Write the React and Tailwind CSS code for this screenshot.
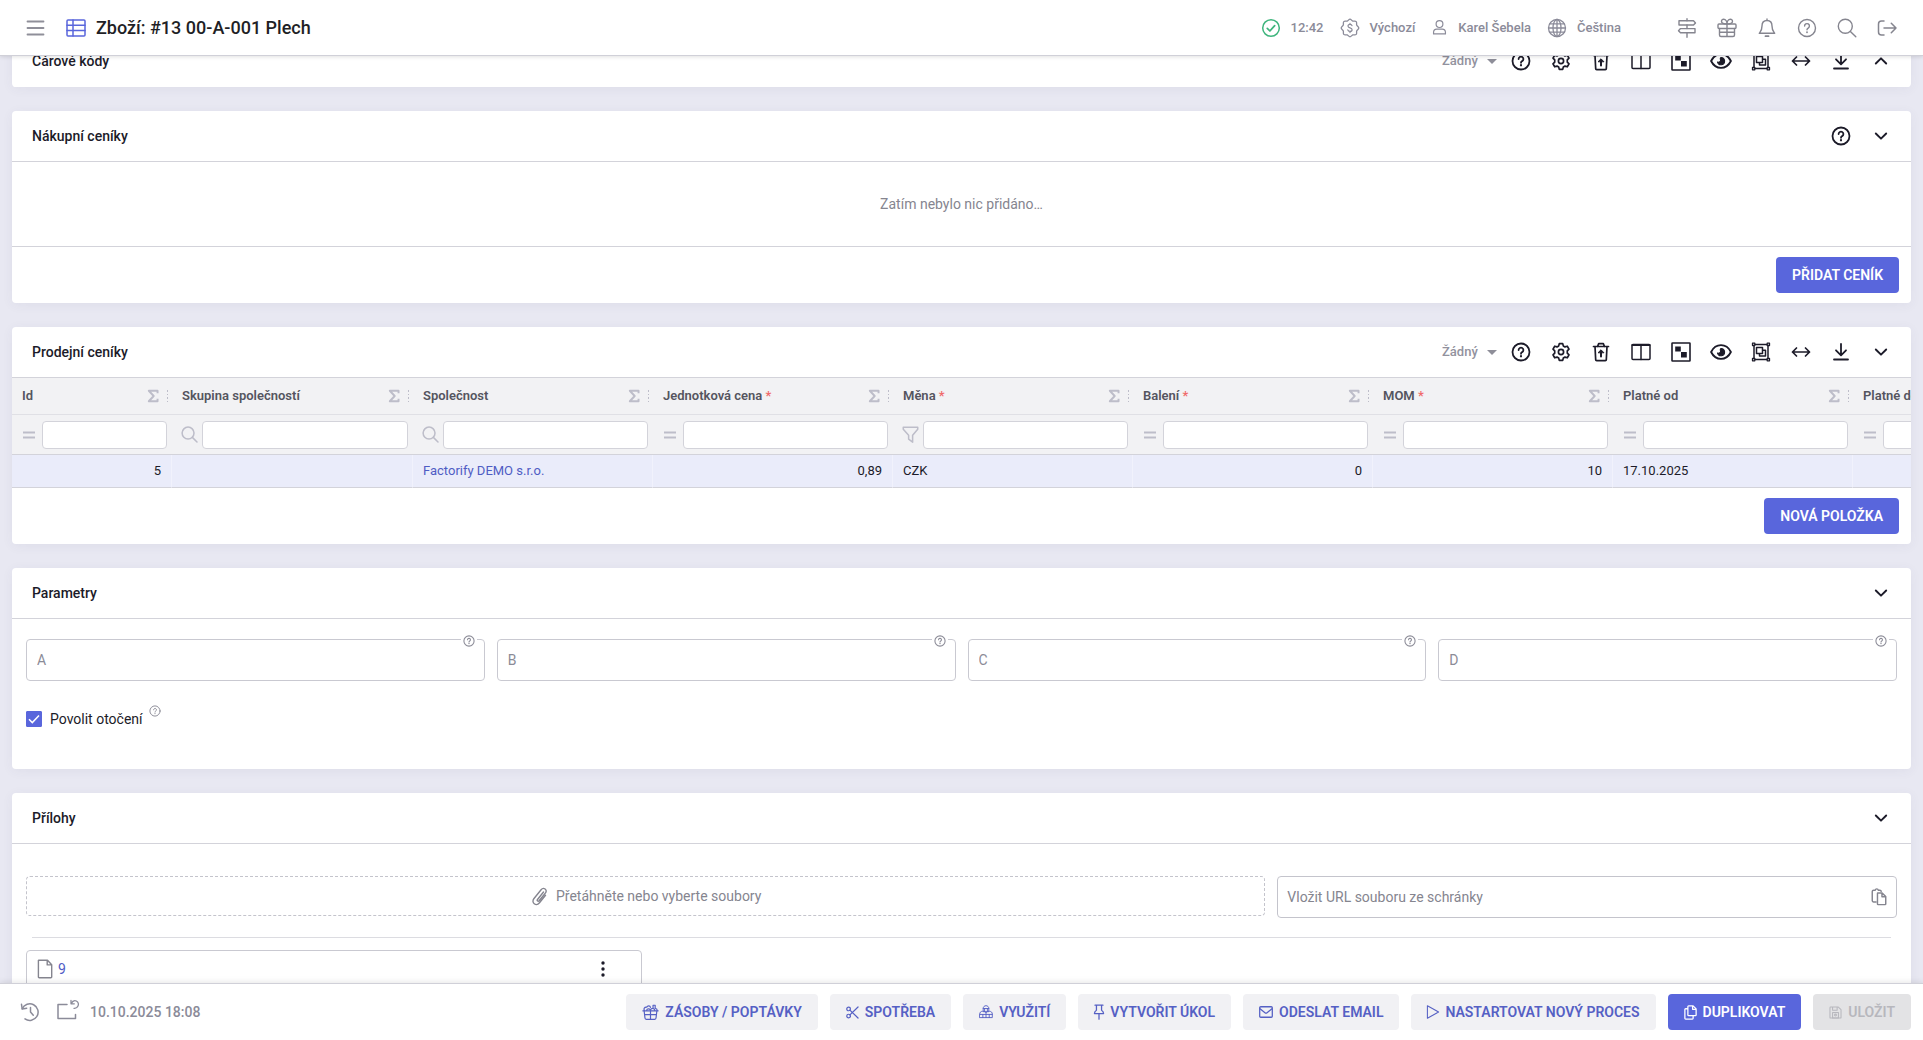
import React from "react";

function Icon({ size = 20, sw = 1.5, className = "", children }) {
  return (
    <svg
      width={size}
      height={size}
      viewBox="0 0 20 20"
      fill="none"
      stroke="currentColor"
      strokeWidth={sw}
      strokeLinecap="round"
      strokeLinejoin="round"
      aria-hidden="true"
      className={`shrink-0 ${className}`}
    >
      {children}
    </svg>
  );
}

const HelpIcon = (p) => (
  <Icon {...p}>
    <circle cx="10" cy="10" r="8.5" />
    <path d="M7.6 8a2.4 2.4 0 1 1 3.6 2.1c-.8.5-1.2.9-1.2 1.7" />
    <path d="M10 14.2v.1" strokeWidth={(p.sw || 1.5) + 0.4} />
  </Icon>
);
const MenuIcon = () => (
  <Icon sw={1.8}>
    <path d="M2.500 3.500h16M2.500 10h16M2.500 16.500h16" />
  </Icon>
);
const TableIcon = () => (
  <Icon sw={1.5}>
    <rect x="1" y="2" width="18" height="16" rx="1" />
    <path d="M1 7.3h18M1 12.6h18M7 2v16" />
  </Icon>
);
const OkIcon = () => (
  <Icon sw={1.5}>
    <circle cx="10" cy="10" r="8.3" />
    <path d="M6.3 10.4l2.6 2.6 4.8-5.4" strokeWidth="1.7" />
  </Icon>
);
const MoneyBadgeIcon = () => (
  <Icon sw={1.3}>
    <path d="M10 1.200c1.100 0 1.700 1.500 2.800 1.900s2.500-.4 3.400.5.100 2.300.5 3.400 2.100 1.800 2.100 3-1.700 1.900-2.100 3 .4 2.500-.5 3.400-2.300.100-3.400.5-1.700 1.900-2.800 1.900-1.700-1.500-2.800-1.900-2.500.4-3.400-.5-.1-2.300-.5-3.400-2.100-1.800-2.100-3 1.700-1.900 2.100-3-.4-2.500.5-3.400 2.300-.1 3.400-.5S8.900 1.200 10 1.200z" />
    <path d="M12 7.700c-.2-.9-1-1.300-2-1.300s-2 .5-2 1.600c0 2.400 4.100 1.200 4.100 3.700 0 1.100-1 1.700-2.100 1.700s-2-.5-2.200-1.500M10 5.300v1M10 13.500v1.100" strokeWidth="1.200" />
  </Icon>
);
const UserIcon = () => (
  <Icon sw={1.4} size={17}>
    <circle cx="10" cy="6" r="4" />
    <path d="M3 17.500v-1.500c0-2.400 1.500-4 3.800-4h6.400c2.300 0 3.800 1.600 3.800 4v1.500z" />
  </Icon>
);
const GlobeIcon = () => (
  <Icon sw={1.3}>
    <circle cx="10" cy="10" r="8.500" />
    <ellipse cx="10" cy="10" rx="4" ry="8.500" />
    <path d="M10 1.500v17M1.500 10h17M2.800 5.800h14.400M2.800 14.200h14.400" />
  </Icon>
);
const SignpostIcon = () => (
  <Icon sw={1.4}>
    <path d="M10 .8v2M10 7v3.600M10 14.800v4.400" />
    <path d="M2 2.800h14.500l2 2.100-2 2.100H2z" />
    <path d="M18 10.600H3.500l-2 2.100 2 2.100H18z" />
  </Icon>
);
const GiftIcon = () => (
  <Icon sw={1.4}>
    <rect x="1" y="6" width="18" height="4.500" rx="1" />
    <path d="M2.500 10.500V17a1.500 1.500 0 0 0 1.500 1.500h12a1.500 1.500 0 0 0 1.500-1.500v-6.500M10 6v12.500M10 6C8 6 4.500 5.500 4.500 3.300 4.500 2 5.500 1.300 6.600 1.300 9 1.300 10 4 10 6zM10 6c2 0 5.500-.5 5.500-2.700 0-1.300-1-2-2.100-2C11 1.300 10 4 10 6zM2.500 14.200h15" />
  </Icon>
);
const BellIcon = () => (
  <Icon sw={1.4}>
    <path d="M10 1v1.500M10 2.500c-3.400 0-5 2.600-5 5.500 0 4.500-1.500 5.500-2.700 7.300h15.400C16.500 13.500 15 12.500 15 8c0-2.900-1.600-5.500-5-5.500z" />
    <path d="M8.500 18.200h3" strokeWidth="1.800" />
  </Icon>
);
const SearchIcon = (p) => (
  <Icon {...p}>
    <circle cx="8.300" cy="8.300" r="7" />
    <path d="M13.400 13.400l5.400 5.400" />
  </Icon>
);
const LogoutIcon = () => (
  <Icon sw={1.5}>
    <path d="M7 3H4.500C2.600 3 1.500 4.100 1.500 6v8c0 1.900 1.100 3 3 3H7M7 10h12M14.300 5.200L19 10l-4.700 4.800" />
  </Icon>
);
const GearIcon = () => (
  <Icon sw={1.7}>
    <circle cx="10" cy="10" r="2.600" />
    <path d="M8.300 1.600h3.400l.6 2.300 1.700 1 2.300-.7 1.700 2.900-1.700 1.700v2.400l1.700 1.700-1.700 2.900-2.300-.7-1.700 1-.6 2.300H8.300l-.6-2.300-1.700-1-2.300.7L2 12.900l1.700-1.700V8.800L2 7.100l1.700-2.900 2.300.7 1.700-1z" />
  </Icon>
);
const TrashUpIcon = () => (
  <Icon sw={1.7}>
    <path d="M2.500 4.500h15M4 4.500l.7 13.200c0 .6.4.9 1 .9h8.600c.6 0 1-.3 1-.9L16 4.500M6.500 4.500l1.200-2.800h4.600l1.200 2.800" />
    <path d="M10 14.500V9.800" strokeWidth="2" />
    <path d="M7.300 10.500L10 7.800l2.700 2.700z" fill="currentColor" strokeWidth="1" />
  </Icon>
);
const ColumnsIcon = () => (
  <Icon sw={1.5}>
    <rect x="1" y="2.500" width="18" height="15" rx="1" />
    <path d="M1.500 3h17" strokeWidth="2.200" />
    <path d="M10 3v14.500" />
  </Icon>
);
const CheckerIcon = () => (
  <Icon sw={1.600}>
    <rect x="1" y="1" width="18" height="18" rx=".5" />
    <path d="M4.200 4.500h5.600v5h-5.600zM10 10h5.800v5.500H10z" fill="currentColor" stroke="none" />
  </Icon>
);
const EyeIcon = () => (
  <Icon sw={1.700} size={22}>
    <path d="M1 10c2-4 5.300-6.200 9-6.200s7 2.200 9 6.200c-2 4-5.300 6.200-9 6.200S3 14 1 10z" />
    <path d="M10 6.800a3.300 3.300 0 1 1-3.200 4.200c1.700.5 3.500-.8 2.600-2.600-.2-.6.100-1.300.6-1.600z" fill="currentColor" strokeWidth="1" />
  </Icon>
);
const GroupIcon = () => (
  <Icon sw={1.500}>
    <path d="M3 2.500h14v15H3z" />
    <path d="M5.500 5.500h6v6h-6zM8.500 11.500V14h6V8.200h-3" />
    <path d="M1.500 1.200h2.300v2.300H1.500zM16.200 1.200h2.300v2.300h-2.300zM1.500 16.500h2.300v2.300H1.500zM16.200 16.500h2.300v2.300h-2.300z" fill="white" strokeWidth="1.300" />
  </Icon>
);
const WidthIcon = () => (
  <Icon sw={1.700}>
    <path d="M1.500 10h17M5.500 6l-4 4 4 4M14.500 6l4 4-4 4" />
  </Icon>
);
const DownloadIcon = () => (
  <Icon sw={1.800}>
    <path d="M10 2v11M5 8.300l5 5 5-5M3 17.500h14" />
  </Icon>
);
const ChevronDown = () => (
  <Icon sw={1.900}>
    <path d="M4.800 7.500l5.200 5.200 5.200-5.200" />
  </Icon>
);
const ChevronUp = () => (
  <Icon sw={1.900}>
    <path d="M4.800 12.500L10 7.300l5.200 5.200" />
  </Icon>
);
const SigmaIcon = () => (
  <Icon size={14} sw={2.800}>
    <path d="M16.500 6V2.500H4l7 7.500-7 7.500h12.500V14" strokeLinecap="butt" />
  </Icon>
);
const DotsIcon = () => (
  <svg width="3" height="14" viewBox="0 0 3 14" fill="currentColor" aria-hidden="true">
    <path d="M1 1h1v2H1zM1 5h1v1H1zM1 8h1v2H1zM1 12h1v1H1z" />
  </svg>
);
const EqualIcon = () => (
  <Icon size={16} sw={2.500}>
    <path d="M2.500 7h15M2.500 13h15" strokeLinecap="butt" />
  </Icon>
);
const FunnelIcon = () => (
  <Icon size={17} sw={1.800}>
    <path d="M1.500 1.500h17v2.200L12.500 11v8L7.800 15.500V11L1.500 3.700z" />
  </Icon>
);
const ClipIcon = () => (
  <Icon sw={1.400}>
    <path d="M13.500 6l-6 7.500c-.9 1.200.6 2.400 1.600 1.300l6.400-7.900c2.300-3-1.900-6.200-4.400-3.200L4 12.500c-3.300 4.200 2.100 8.400 5.500 4.300l6-7.500" />
  </Icon>
);
const PasteIcon = () => (
  <Icon size={18} sw={1.600}>
    <path d="M6.800 15.500H4A1.500 1.500 0 0 1 2.500 14V4A1.500 1.500 0 0 1 4 2.500h1.800C6 1.300 6.800 1 7.500 1s1.500.3 1.700 1.500H11c.8 0 1.400.5 1.500 1.200" />
    <path d="M8.500 5.500h5l4 4v8.300c0 .5-.3.700-.8.700H9c-.4 0-.7-.3-.7-.7V6c0-.3 0-.5.200-.5zM13.300 5.700v4h4" />
  </Icon>
);
const FileIcon = () => (
  <Icon sw={1.400} className="text-[#85858f]">
    <path d="M3.500 1.200h9l4.200 4.500V18a.8.8 0 0 1-.8.800H4.200a.8.8 0 0 1-.8-.8V1.500zM12.200 1.400v4.500h4.300" />
  </Icon>
);
const KebabIcon = () => (
  <svg width="4" height="16" viewBox="0 0 4 16" fill="currentColor" aria-hidden="true">
    <circle cx="2" cy="2" r="1.700" />
    <circle cx="2" cy="8" r="1.700" />
    <circle cx="2" cy="14" r="1.700" />
  </svg>
);
const HistoryIcon = () => (
  <Icon sw={1.500}>
    <path d="M2.200 6.800A8.300 8.300 0 1 1 5 16.900" />
    <path d="M1.500 2.300l.7 4.700 4.500-.8M10.500 5.500V10l2.800 3.300" />
  </Icon>
);
const RestoreIcon = () => (
  <svg
    width="24"
    height="24"
    viewBox="0 0 24 24"
    fill="none"
    stroke="currentColor"
    strokeWidth="1.500"
    strokeLinecap="round"
    strokeLinejoin="round"
    aria-hidden="true"
  >
    <path d="M11 6.500H2v14h17.500v-4" />
    <path d="M15 2.500v3.300h3.300M15.300 5.500c1.200-2.400 3.300-3.300 5-2.500 2 .9 2.600 3.200 1.700 5-.8 1.700-2.300 2.500-4 2.300" strokeWidth="1.300" />
  </svg>
);
const BasketIcon = () => (
  <Icon size={17} sw={1.400}>
    <path d="M1 8h18M2.500 8l1 8.500c.1 1 .6 1.500 1.500 1.500h10c.9 0 1.400-.5 1.500-1.500l1-8.500M10 8v10M3 8C1.500 5.500 3 3.500 5.500 3.800 6.500 1.500 9.500 1.500 10 4M5.500 7.500c0-2 3-2.500 4.500-.5M10 7c1-2.500 4-2.500 5 0M13 5V1.500h2.500V5c2 .5 2.500 1.500 2.500 3M3.500 12.500h13" />
  </Icon>
);
const ScissorsIcon = () => (
  <Icon size={13} sw={1.900}>
    <circle cx="4" cy="4.500" r="2.800" />
    <circle cx="4" cy="15.500" r="2.800" />
    <path d="M6 6.300l12.500 12.200M6 13.700L18.500 1.500" />
  </Icon>
);
const BoxesIcon = () => (
  <Icon size={14} sw={1.300}>
    <path d="M6 9V4.500C6 2.500 8 1 10 1s4 1.500 4 3.500V9zM6 5h8M1 13c0-2.500 1.500-4 4-4h1.500c1.500 0 2.500.7 3.500 2 1-1.300 2-2 3.500-2H15c2.500 0 4 1.500 4 4v5H1zM10 11v7M1 13.500h18M5.500 13.500V18M14.600 13.500V18M8 5v3.500M12 5v3.500" />
  </Icon>
);
const PinIcon = () => (
  <Icon size={16} sw={1.600} className="-mx-[3px]">
    <path d="M5 1.500h10M6.800 1.500v6.300C5 8.800 4.300 10 4.300 12h11.400c0-2-.7-3.200-2.500-4.200V1.500M10 12v7" />
  </Icon>
);
const MailIcon = () => (
  <Icon size={14} sw={1.800}>
    <rect x="1" y="2.500" width="18" height="15" rx="1.500" />
    <path d="M1.500 5.500l7 5.500c1 .8 2 .8 3 0l7-5.500" />
  </Icon>
);
const PlayIcon = () => (
  <Icon size={14} sw={1.500} className="-mx-px">
    <path d="M2 1v18l16-9z" />
  </Icon>
);
const CopyIcon = () => (
  <Icon size={15} sw={1.700} className="-mx-px">
    <path d="M7.500 1.200h6l4 4v8c0 .7-.3 1-1 1h-9c-.7 0-1-.3-1-1v-11c0-.7.300-1 1-1zM12.800 1.500v4.300h4.500M6.500 5H3.500c-.7 0-1 .3-1 1v11.700c0 .7.300 1 1 1h9c.7 0 1-.3 1-1v-3.500" />
  </Icon>
);
const SaveIcon = () => (
  <Icon size={13} sw={1.600}>
    <path d="M1.500 2.500c0-.6.400-1 1-1H14l4.500 4v12c0 .6-.4 1-1 1h-15c-.6 0-1-.4-1-1zM5.500 1.500v5h7v-5" />
    <rect x="5.500" y="10" width="9" height="8.500" />
    <circle cx="10" cy="14" r="1.500" />
  </Icon>
);

function IconButton({ label, children }) {
  return (
    <button type="button" aria-label={label} className="flex h-10 w-10 items-center justify-center">
      {children}
    </button>
  );
}

function Toolbar({ open }) {
  return (
    <>
      <div className="relative mr-1 flex items-center">
        <select
          aria-label="Šablona zobrazení"
          className="h-8 w-[55px] appearance-none bg-transparent text-[13px] leading-6 font-medium text-[#92929e] outline-none"
        >
          <option>Žádný</option>
        </select>
        <svg width="10" height="5" viewBox="0 0 10 5" className="pointer-events-none absolute right-0" aria-hidden="true">
          <path d="M0 0h10L5 5z" fill="#8e8e99" />
        </svg>
      </div>
      <IconButton label="Nápověda"><HelpIcon sw={1.800} /></IconButton>
      <IconButton label="Nastavení"><GearIcon /></IconButton>
      <IconButton label="Obnovit smazané"><TrashUpIcon /></IconButton>
      <IconButton label="Sloupce"><ColumnsIcon /></IconButton>
      <IconButton label="Výběr"><CheckerIcon /></IconButton>
      <IconButton label="Zobrazení"><EyeIcon /></IconButton>
      <IconButton label="Seskupit"><GroupIcon /></IconButton>
      <IconButton label="Šířka"><WidthIcon /></IconButton>
      <IconButton label="Stáhnout"><DownloadIcon /></IconButton>
      <IconButton label={open ? "Sbalit" : "Rozbalit"}>{open ? <ChevronDown /> : <ChevronUp />}</IconButton>
    </>
  );
}

function Card({ title, tools, children }) {
  return (
    <section className="overflow-hidden rounded bg-white shadow-[0_2px_12px_rgba(60,60,110,0.06)]">
      <div
        className={`flex h-[51px] items-center border-b pr-[10px] pl-5 ${children ? "border-[#d3d3da]" : "border-white"}`}
      >
        <h2 className="flex-1 text-sm font-medium text-[#1c1b29]">{title}</h2>
        {tools}
      </div>
      {children}
    </section>
  );
}

function PrimaryButton({ children }) {
  return (
    <button type="button" className="h-9 rounded bg-[#5966dc] px-4 text-sm font-semibold text-white">
      {children}
    </button>
  );
}

const columns = [
  { name: "Id", width: "w-40", filter: "eq", value: "5", right: true },
  { name: "Skupina společností", width: "w-[241px]", filter: "search", value: "" },
  { name: "Společnost", width: "w-60", filter: "search", value: "Factorify DEMO s.r.o.", link: true },
  { name: "Jednotková cena", width: "w-60", required: true, filter: "eq", value: "0,89", right: true },
  { name: "Měna", width: "w-60", required: true, filter: "funnel", value: "CZK" },
  { name: "Balení", width: "w-60", required: true, filter: "eq", value: "0", right: true },
  { name: "MOM", width: "w-60", required: true, filter: "eq", value: "10", right: true },
  { name: "Platné od", width: "w-60", filter: "eq", value: "17.10.2025" },
  { name: "Platné do", width: "w-60", filter: "eq", value: "" },
];

function FilterIcon({ kind }) {
  if (kind === "search") return <SearchIcon size={17} sw={1.800} />;
  if (kind === "funnel") return <FunnelIcon />;
  return <EqualIcon />;
}

function PriceTable() {
  return (
    <div className="overflow-hidden">
      <table className="w-[2081px] table-fixed border-separate border-spacing-0 text-left">
        <colgroup>
          {columns.map((c) => (
            <col key={c.name} className={c.width} />
          ))}
        </colgroup>
        <thead className="bg-[#f2f2f4]">
          <tr>
            {columns.map((c) => (
              <th key={c.name} scope="col" className="h-[37px] border-b border-[#e0e0e5] p-0 pr-[3px] pl-[10px]">
                <div className="flex items-center text-[13px] font-semibold text-[#55555f]">
                  <span className="flex-1 whitespace-nowrap">
                    {c.name}
                    {c.required && <span className="text-[#f06a6a]"> *</span>}
                  </span>
                  <span className="flex items-center gap-[6px] text-[#bdbdc9]">
                    <SigmaIcon />
                    <DotsIcon />
                  </span>
                </div>
              </th>
            ))}
          </tr>
          <tr>
            {columns.map((c) => (
              <td key={c.name} className="h-10 border-b border-[#d3d3da] p-0 pr-[5px] pl-[9px]">
                <div className="flex items-center text-[#bdbdc9]">
                  <span className="flex w-[21px] shrink-0">
                    <FilterIcon kind={c.filter} />
                  </span>
                  <input
                    type="text"
                    aria-label={`Filtr ${c.name}`}
                    className="h-7 w-full min-w-0 rounded border border-[#d3d3da] bg-white px-2 text-[13px] outline-none"
                  />
                </div>
              </td>
            ))}
          </tr>
        </thead>
        <tbody>
          <tr className="bg-[#eaecfa] text-[13px] text-[#1c1b29]">
            {columns.map((c) => (
              <td
                key={c.name}
                className={`h-[33px] border-r border-b border-r-[#f1f2fc] border-b-[#d3d3da] p-0 px-[10px] ${c.right ? "text-right" : ""}`}
              >
                {c.link ? (
                  <a href="#spolecnost" className="text-[#4f5cc4]">
                    {c.value}
                  </a>
                ) : (
                  c.value
                )}
              </td>
            ))}
          </tr>
        </tbody>
      </table>
    </div>
  );
}

function ParamField({ name }) {
  return (
    <div className="relative">
      <input
        type="text"
        aria-label={name}
        placeholder={name}
        className="h-[42px] w-full rounded border border-[#c9c9d1] bg-white px-[10px] text-sm text-[#1c1b29] outline-none placeholder:text-[#8b8b97]"
      />
      <span className="absolute -top-1 right-2 bg-white px-0.5 text-[#8b8b97]">
        <HelpIcon size={12} sw={1.800} />
      </span>
    </div>
  );
}

function FooterButton({ icon, children }) {
  return (
    <button
      type="button"
      className="flex h-9 items-center gap-[6px] rounded bg-[#f1f1f4] px-4 text-sm font-semibold whitespace-nowrap text-[#5560c4]"
    >
      {icon}
      {children}
    </button>
  );
}

export default function App() {
  return (
    <div className="flex h-screen flex-col overflow-hidden bg-[#e8e8f2] font-['Roboto',sans-serif] text-[#1c1b29]">
      <header className="z-10 flex h-14 shrink-0 items-center border-b border-[#d0d0d8] bg-white pr-4 shadow-[0_1px_4px_rgba(0,0,0,0.12)]">
        <button type="button" aria-label="Menu" className="ml-[25px] text-[#8f8f99]">
          <MenuIcon />
        </button>
        <span className="ml-[21px] text-[#5966dc]">
          <TableIcon />
        </span>
        <h1 className="ml-[10px] flex-1 text-lg font-medium text-[#1f1f26]">Zboží: #13 00-A-001 Plech</h1>
        <div className="flex items-center gap-4 text-[13px] font-medium text-[#8b8b99]">
          <span className="flex items-center gap-[10px]">
            <span className="text-[#3fb57d]">
              <OkIcon />
            </span>
            12:42
          </span>
          <button type="button" className="flex items-center gap-[10px]">
            <MoneyBadgeIcon />
            Výchozí
          </button>
          <button type="button" className="flex items-center gap-[10px]">
            <UserIcon />
            Karel Šebela
          </button>
          <button type="button" className="flex items-center gap-[10px]">
            <GlobeIcon />
            Čeština
          </button>
        </div>
        <div className="ml-[46px] flex text-[#85858f]">
          <IconButton label="Rozcestník"><SignpostIcon /></IconButton>
          <IconButton label="Novinky"><GiftIcon /></IconButton>
          <IconButton label="Upozornění"><BellIcon /></IconButton>
          <IconButton label="Nápověda"><HelpIcon sw={1.400} /></IconButton>
          <IconButton label="Hledat"><SearchIcon sw={1.400} /></IconButton>
          <IconButton label="Odhlásit"><LogoutIcon /></IconButton>
        </div>
      </header>

      <main className="min-h-0 flex-1 overflow-hidden px-3">
        <div className="-mt-5 flex flex-col gap-6">
          <Card title="Čárové kódy" tools={<Toolbar />} />

          <Card
            title="Nákupní ceníky"
            tools={
              <>
                <IconButton label="Nápověda"><HelpIcon sw={1.800} /></IconButton>
                <IconButton label="Sbalit"><ChevronDown /></IconButton>
              </>
            }
          >
            <p className="flex h-[84px] items-center justify-center text-sm text-[#85858f]">Zatím nebylo nic přidáno…</p>
            <div className="flex justify-end border-t border-[#d3d3da] px-3 py-[10px]">
              <PrimaryButton>PŘIDAT CENÍK</PrimaryButton>
            </div>
          </Card>

          <Card title="Prodejní ceníky" tools={<Toolbar open />}>
            <PriceTable />
            <div className="flex justify-end px-3 py-[10px]">
              <PrimaryButton>NOVÁ POLOŽKA</PrimaryButton>
            </div>
          </Card>

          <Card title="Parametry" tools={<IconButton label="Sbalit"><ChevronDown /></IconButton>}>
            <div className="px-[14px] pt-5 pb-10">
              <div className="grid grid-cols-4 gap-3">
                {["A", "B", "C", "D"].map((n) => (
                  <ParamField key={n} name={n} />
                ))}
              </div>
              <div className="mt-7 flex h-5 items-center">
                <label className="flex items-center gap-2 text-sm">
                  <span className="relative flex h-4 w-4">
                    <input
                      type="checkbox"
                      defaultChecked
                      className="peer h-4 w-4 appearance-none rounded-[1px] border border-[#5966dc] bg-white checked:bg-[#5966dc]"
                    />
                    <svg
                      viewBox="0 0 16 16"
                      fill="none"
                      stroke="white"
                      strokeWidth="1.500"
                      className="pointer-events-none absolute inset-0 hidden peer-checked:block"
                      aria-hidden="true"
                    >
                      <path d="M3 8.300l3.300 3.300L13 4.500" />
                    </svg>
                  </span>
                  Povolit otočení
                </label>
                <span className="mb-4 ml-[6px] text-[#8b8b97]">
                  <HelpIcon size={12} sw={1.600} />
                </span>
              </div>
            </div>
          </Card>

          <Card title="Přílohy" tools={<IconButton label="Sbalit"><ChevronDown /></IconButton>}>
            <div className="px-[14px] pt-8 pb-6">
              <div className="grid grid-cols-[2fr_1fr] items-start gap-3">
                <button
                  type="button"
                  className="flex h-10 items-center justify-center gap-[6px] rounded border border-dashed border-[#c4c4cc] text-sm text-[#85858f]"
                >
                  <ClipIcon />
                  Přetáhněte nebo vyberte soubory
                </button>
                <div className="relative">
                  <input
                    type="text"
                    aria-label="Vložit URL souboru ze schránky"
                    placeholder="Vložit URL souboru ze schránky"
                    className="h-[42px] w-full rounded border border-[#c4c4cc] bg-white pr-10 pl-[9px] text-sm outline-none placeholder:text-[#85858f]"
                  />
                  <button
                    type="button"
                    aria-label="Vložit ze schránky"
                    className="absolute inset-y-0 right-0 flex w-9 items-center justify-center text-[#85858f]"
                  >
                    <PasteIcon />
                  </button>
                </div>
              </div>
              <hr className="mx-[6px] mt-[19px] mb-3 border-[#dcdce1]" />
              <div className="grid grid-cols-3 gap-3">
                <div className="flex h-[60px] items-start rounded border border-[#c9c9d1] pt-2 pr-9 pl-2">
                  <FileIcon />
                  <a href="#soubor-9" className="ml-[3px] flex-1 text-sm leading-5 text-[#4f5cc4]">
                    9
                  </a>
                  <button type="button" aria-label="Další akce" className="mt-0.5">
                    <KebabIcon />
                  </button>
                </div>
              </div>
            </div>
          </Card>
        </div>
      </main>

      <footer className="z-10 flex h-[57px] shrink-0 items-center border-t border-[#d0d0d8] bg-white px-3 shadow-[0_-1px_6px_rgba(0,0,0,0.1)]">
        <div className="flex flex-1 items-center text-sm font-medium text-[#8b8b99]">
          <button type="button" aria-label="Historie" className="ml-2">
            <HistoryIcon />
          </button>
          <button type="button" aria-label="Obnovit okno" className="mr-[10px] mb-1 ml-4">
            <RestoreIcon />
          </button>
          <time>10.10.2025 18:08</time>
        </div>
        <div className="flex gap-3">
          <FooterButton icon={<BasketIcon />}>ZÁSOBY / POPTÁVKY</FooterButton>
          <FooterButton icon={<ScissorsIcon />}>SPOTŘEBA</FooterButton>
          <FooterButton icon={<BoxesIcon />}>VYUŽITÍ</FooterButton>
          <FooterButton icon={<PinIcon />}>VYTVOŘIT ÚKOL</FooterButton>
          <FooterButton icon={<MailIcon />}>ODESLAT EMAIL</FooterButton>
          <FooterButton icon={<PlayIcon />}>NASTARTOVAT NOVÝ PROCES</FooterButton>
          <button
            type="button"
            className="flex h-9 items-center gap-[6px] rounded bg-[#5966dc] px-4 text-sm font-semibold text-white"
          >
            <CopyIcon />
            DUPLIKOVAT
          </button>
          <button
            type="button"
            disabled
            className="flex h-9 items-center gap-[6px] rounded bg-[#e3e3e5] px-4 text-sm font-semibold text-[#b7b7bd]"
          >
            <SaveIcon />
            ULOŽIT
          </button>
        </div>
      </footer>
    </div>
  );
}
